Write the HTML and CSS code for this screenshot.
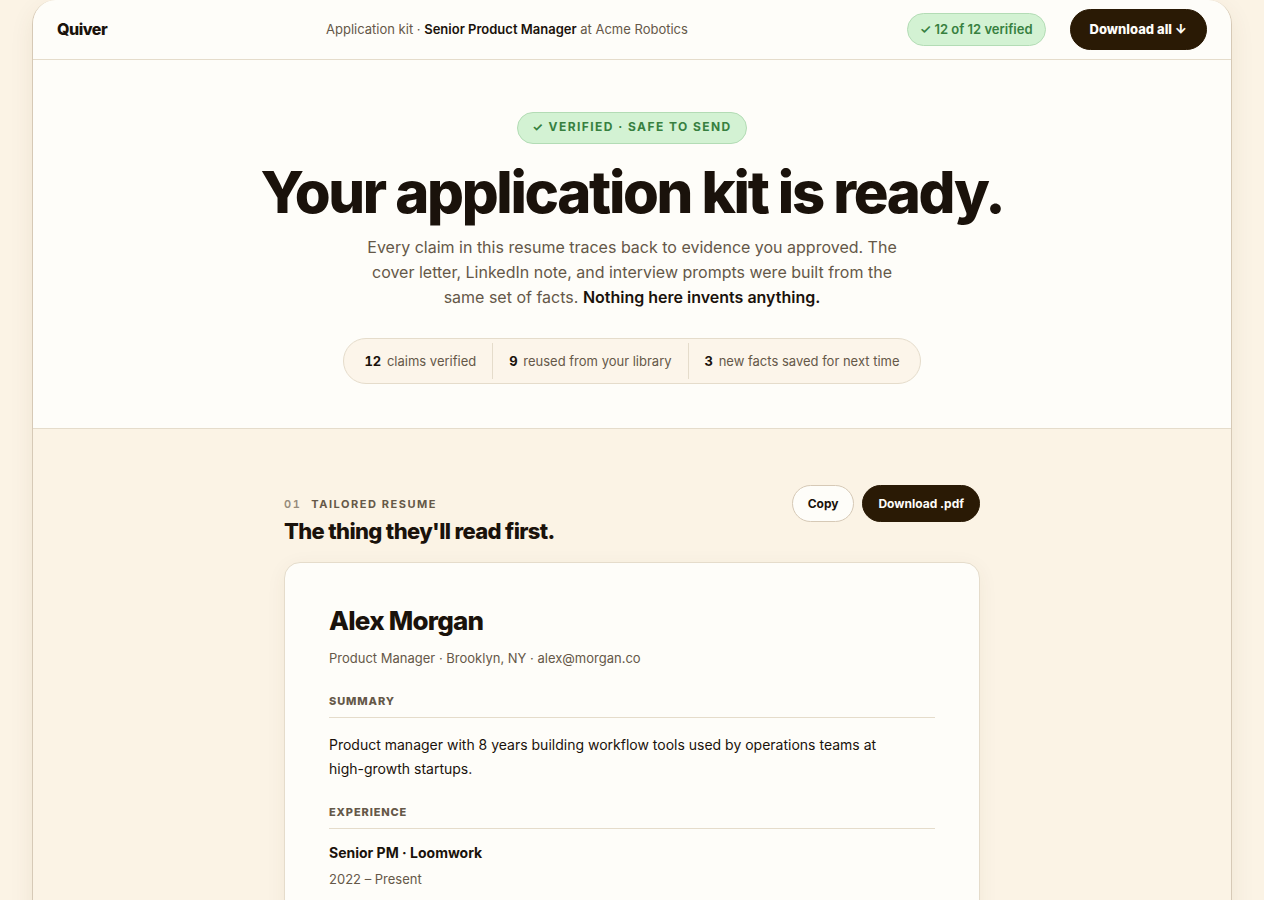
FILE: index.html
```html
<!DOCTYPE html>
<html lang="en">
<head>
    <meta charset="UTF-8">
    <meta name="viewport" content="width=device-width, initial-scale=1.0">
    <title>Quiver - Application kit</title>
    <link rel="stylesheet" href="styles.css">
</head>
<body>
    <div class="frame">
        <header class="topbar">
            <a href="#" class="brand">Quiver</a>
            <p class="crumb">Application kit · <strong>Senior Product Manager</strong> at Acme Robotics</p>
            <div class="topbar-actions">
                <span class="verified-pill">✓ 12 of 12 verified</span>
                <button type="button" class="btn btn-dark btn-large">Download all ↓</button>
            </div>
        </header>

        <section class="hero">
            <span class="hero-badge">✓ Verified · Safe to send</span>
            <h1>Your application kit is ready.</h1>
            <p class="hero-text">Every claim in this resume traces back to evidence you approved. The cover letter, LinkedIn note, and interview prompts were built from the same set of facts. <strong>Nothing here invents anything.</strong></p>
            <ul class="stats">
                <li><strong>12</strong> claims verified</li>
                <li><strong>9</strong> reused from your library</li>
                <li><strong>3</strong> new facts saved for next time</li>
            </ul>
        </section>

        <main class="content">
            <div class="section-head">
                <div>
                    <p class="eyebrow"><span>01</span>Tailored resume</p>
                    <h2>The thing they'll read first.</h2>
                </div>
                <div class="section-actions">
                    <button type="button" class="btn btn-light">Copy</button>
                    <button type="button" class="btn btn-dark">Download .pdf</button>
                </div>
            </div>

            <article class="resume">
                <h3 class="resume-name">Alex Morgan</h3>
                <p class="resume-contact">Product Manager · Brooklyn, NY · alex@morgan.co</p>

                <h4>Summary</h4>
                <p class="resume-summary">Product manager with 8 years building workflow tools used by operations teams at <span class="nowrap">high-growth</span> startups.</p>

                <h4>Experience</h4>
                <p class="job-title">Senior PM · Loomwork</p>
                <p class="job-dates">2022 – Present</p>
            </article>
        </main>
    </div>
</body>
</html>
```
FILE: styles.css
```css
:root {
    --cream: #fbf3e5;
    --paper: #fefdf9;
    --ink: #1a120b;
    --muted: #655848;
    --brown: #2a1a05;
    --line: #e5dccb;
    --line-strong: #d6c9b6;
    --green: #37803f;
    --green-bg: #d3f2d3;
    --green-line: #b3dcb5;
}
* {
    box-sizing: border-box;
}
body {
    margin: 0;
    background: var(--cream);
    color: var(--ink);
    font-family: Inter, "Liberation Sans", sans-serif;
    font-size: 14px;
    line-height: 24px;
}
h1, h2, h3, h4, p, ul {
    margin: 0;
    padding: 0;
}
.nowrap {
    white-space: nowrap;
}
.frame {
    max-width: 1200px;
    min-height: 100vh;
    margin: 0 auto;
    border: 1px solid var(--line-strong);
    border-width: 0 1px;
    border-radius: 24px 24px 0 0;
    background: var(--cream);
    box-shadow: 0 8px 24px rgba(90, 60, 20, 0.08);
    overflow: hidden;
}

/* Top bar */
.topbar {
    display: flex;
    align-items: center;
    justify-content: space-between;
    height: 60px;
    padding: 0 24px;
    background: var(--paper);
    border-bottom: 1px solid var(--line);
    line-height: 25px;
}
.brand {
    color: var(--ink);
    font-size: 16px;
    font-weight: 800;
    letter-spacing: -0.03em;
    text-decoration: none;
}
.crumb {
    color: var(--muted);
    font-size: 13px;
}
.crumb strong, .hero-text strong {
    color: var(--ink);
    font-weight: 600;
}
.topbar-actions {
    display: flex;
    align-items: center;
    gap: 24px;
}
.verified-pill {
    padding: 3px 12px;
    border: 1px solid var(--green-line);
    border-radius: 999px;
    background: var(--green-bg);
    color: var(--green);
    font-size: 13px;
    font-weight: 600;
}
.btn {
    padding: 8px 15px;
    border: 1px solid var(--brown);
    border-radius: 999px;
    font-family: inherit;
    font-size: 12px;
    font-weight: 700;
    line-height: 19px;
    cursor: pointer;
}
.btn-dark {
    background: var(--brown);
    color: var(--paper);
}
.btn-light {
    border-color: var(--line-strong);
    background: var(--paper);
    color: var(--ink);
}
.btn-large {
    padding: 10px 19px;
    font-size: 13px;
    font-weight: 800;
}

/* Hero */
.hero {
    display: flex;
    flex-direction: column;
    align-items: center;
    padding: 52px 24px 44px;
    background: var(--paper);
    border-bottom: 1px solid var(--line);
    text-align: center;
}
.hero-badge {
    padding: 3px 14px 5px;
    border: 1px solid var(--green-line);
    border-radius: 999px;
    background: var(--green-bg);
    color: var(--green);
    font-size: 12px;
    font-weight: 700;
    line-height: 22px;
    letter-spacing: 0.12em;
    text-transform: uppercase;
}
h1 {
    margin-top: 18px;
    font-size: 58px;
    font-weight: 800;
    line-height: 60px;
    letter-spacing: -0.04em;
}
.hero-text {
    max-width: 560px;
    margin-top: 13px;
    color: var(--muted);
    font-size: 16px;
    line-height: 25px;
}
.stats {
    display: flex;
    margin-top: 28px;
    padding: 4px;
    border: 1px solid var(--line);
    border-radius: 999px;
    background: #fcf5ea;
    color: var(--muted);
    font-size: 13px;
    list-style: none;
}
.stats li {
    padding: 6px 16px;
}
.stats li + li {
    border-left: 1px solid var(--line);
}
.stats strong {
    margin-right: 2px;
    color: var(--ink);
    font-weight: 700;
    font-variant-numeric: tabular-nums;
}

/* Sections */
.content {
    max-width: 744px;
    margin: 0 auto;
    padding: 56px 24px;
}
.section-head {
    display: flex;
    align-items: flex-start;
    justify-content: space-between;
    margin-bottom: 17px;
}
.section-actions {
    display: flex;
    gap: 8px;
}
.eyebrow {
    margin-top: 10px;
    color: var(--muted);
    font-size: 11px;
    font-weight: 700;
    line-height: 18px;
    letter-spacing: 0.14em;
    text-transform: uppercase;
}
.eyebrow span {
    margin-right: 10px;
    color: #968a7b;
    font-weight: 600;
    font-variant-numeric: tabular-nums;
}
h2 {
    margin-top: 4px;
    font-size: 22px;
    font-weight: 800;
    line-height: 28px;
    letter-spacing: -0.03em;
}

/* Resume card */
.resume {
    padding: 44px;
    border: 1px solid var(--line);
    border-radius: 16px;
    background: var(--paper);
    box-shadow: 0 4px 20px rgba(90, 60, 20, 0.06);
}
.resume-name {
    font-size: 26px;
    font-weight: 800;
    line-height: 28px;
    letter-spacing: -0.03em;
}
.resume-contact {
    margin-top: 11px;
    color: var(--muted);
    font-size: 13px;
}
.resume h4 {
    margin-top: 21px;
    padding-bottom: 6px;
    border-bottom: 1px solid var(--line);
    color: var(--muted);
    font-size: 11px;
    font-weight: 800;
    line-height: 20px;
    letter-spacing: 0.08em;
    text-transform: uppercase;
}
.resume-summary {
    margin-top: 15px;
}
.job-title {
    margin-top: 12px;
    font-weight: 700;
}
.job-dates {
    margin-top: 2px;
    color: var(--muted);
    font-size: 13px;
}
```
